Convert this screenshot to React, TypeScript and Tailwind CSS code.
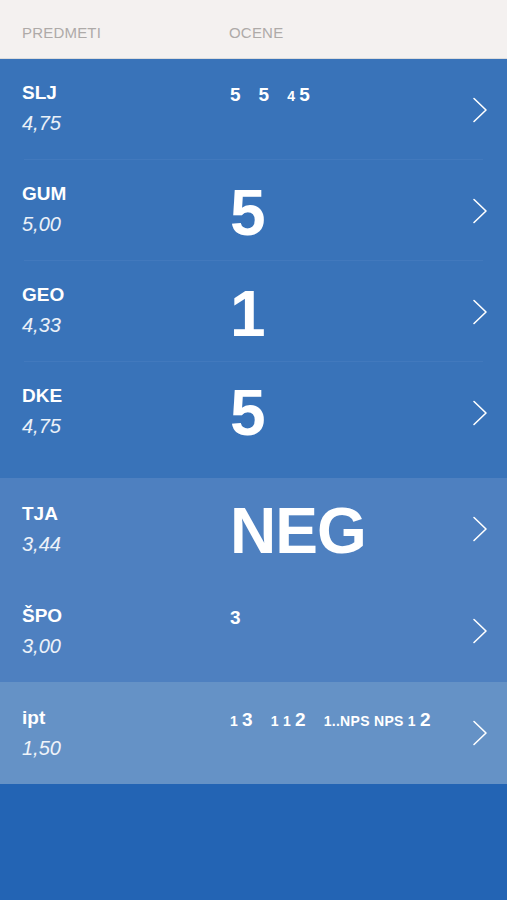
import React from "react";

type Grade = { main: string; pre?: string };

type Row = {
  name: string;
  avg: string;
  big?: string;
  grades?: Grade[];
  tone: "a" | "b" | "c";
  line?: boolean;
  tall?: boolean;
};

const rows: Row[] = [
  { name: "SLJ", avg: "4,75", tone: "a", line: true, grades: [{ main: "5" }, { main: "5" }, { pre: "4", main: "5" }] },
  { name: "GUM", avg: "5,00", tone: "a", line: true, big: "5" },
  { name: "GEO", avg: "4,33", tone: "a", line: true, big: "1" },
  { name: "DKE", avg: "4,75", tone: "a", big: "5", tall: true },
  { name: "TJA", avg: "3,44", tone: "b", big: "NEG" },
  { name: "ŠPO", avg: "3,00", tone: "b", grades: [{ main: "3" }] },
  {
    name: "ipt",
    avg: "1,50",
    tone: "c",
    grades: [
      { pre: "1", main: "3" },
      { pre: "1 1", main: "2" },
      { pre: "1..NPS NPS 1", main: "2" },
    ],
  },
];

const toneBg = {
  a: "bg-[#3973b9]",
  b: "bg-[#4e80c0]",
  c: "bg-[#6592c6]",
};

function Chevron() {
  return (
    <svg width="16" height="26" viewBox="0 0 16 26" fill="none" className="shrink-0">
      <path d="M2 1.5 L14 13 L2 24.5" stroke="white" strokeWidth="1.6" strokeLinecap="round" strokeLinejoin="round" />
    </svg>
  );
}

function GradeRow({ row }: { row: Row }) {
  const height = row.tall ? "h-[116px]" : row.tone === "a" ? "h-[101px]" : "h-[102px]";
  const pad = row.tone === "a" ? "pt-[22px]" : "pt-[24px]";
  return (
    <div className={`${toneBg[row.tone]} relative`}>
      <div className={`flex items-stretch pl-[22px] pr-[19px] ${height}`}>
        <div className={`w-[208px] shrink-0 ${pad}`}>
          <div className="text-[19px] font-bold leading-[24px] text-white">{row.name}</div>
          <div className="mt-[6px] text-[20px] italic leading-[24px] text-white/90">{row.avg}</div>
        </div>

        <div className={`flex-1 ${row.big ? (row.tall ? "-mt-[14px] flex items-center" : "flex items-center pt-[4px]") : pad}`}>
          {row.big ? (
            <span className="text-[64px] font-bold leading-none tracking-[-1px] text-white">{row.big}</span>
          ) : (
            <div className="flex items-baseline gap-[18px] text-white font-bold">
              {row.grades?.map((g, i) => (
                <span key={i} className="flex items-baseline gap-[4px]">
                  {g.pre && <span className="text-[14px] tracking-[0.3px]">{g.pre}</span>}
                  <span className="text-[19px]">{g.main}</span>
                </span>
              ))}
            </div>
          )}
        </div>

        <div className={`flex items-center ${row.tall ? "-mt-[14px]" : ""}`}>
          <Chevron />
        </div>
      </div>
      {row.line && <div className="absolute bottom-0 left-[24px] right-[24px] h-px bg-[#4279bd]" />}
    </div>
  );
}

export default function App() {
  return (
    <div className="min-h-screen h-[900px] bg-[#2364b4] font-['Liberation_Sans',Arial,sans-serif]">
      {/* Header */}
      <div className="h-[59px] bg-[#f4f1f0] flex items-center pl-[22px] pt-[8px] border-b border-[#dcdcdc]">
        <div className="w-[207px] text-[15px] tracking-[0.2px] text-[#aeaaa8]">PREDMETI</div>
        <div className="text-[15px] tracking-[0.2px] text-[#aeaaa8]">OCENE</div>
      </div>

      {rows.map((r) => (
        <GradeRow key={r.name} row={r} />
      ))}
    </div>
  );
}
